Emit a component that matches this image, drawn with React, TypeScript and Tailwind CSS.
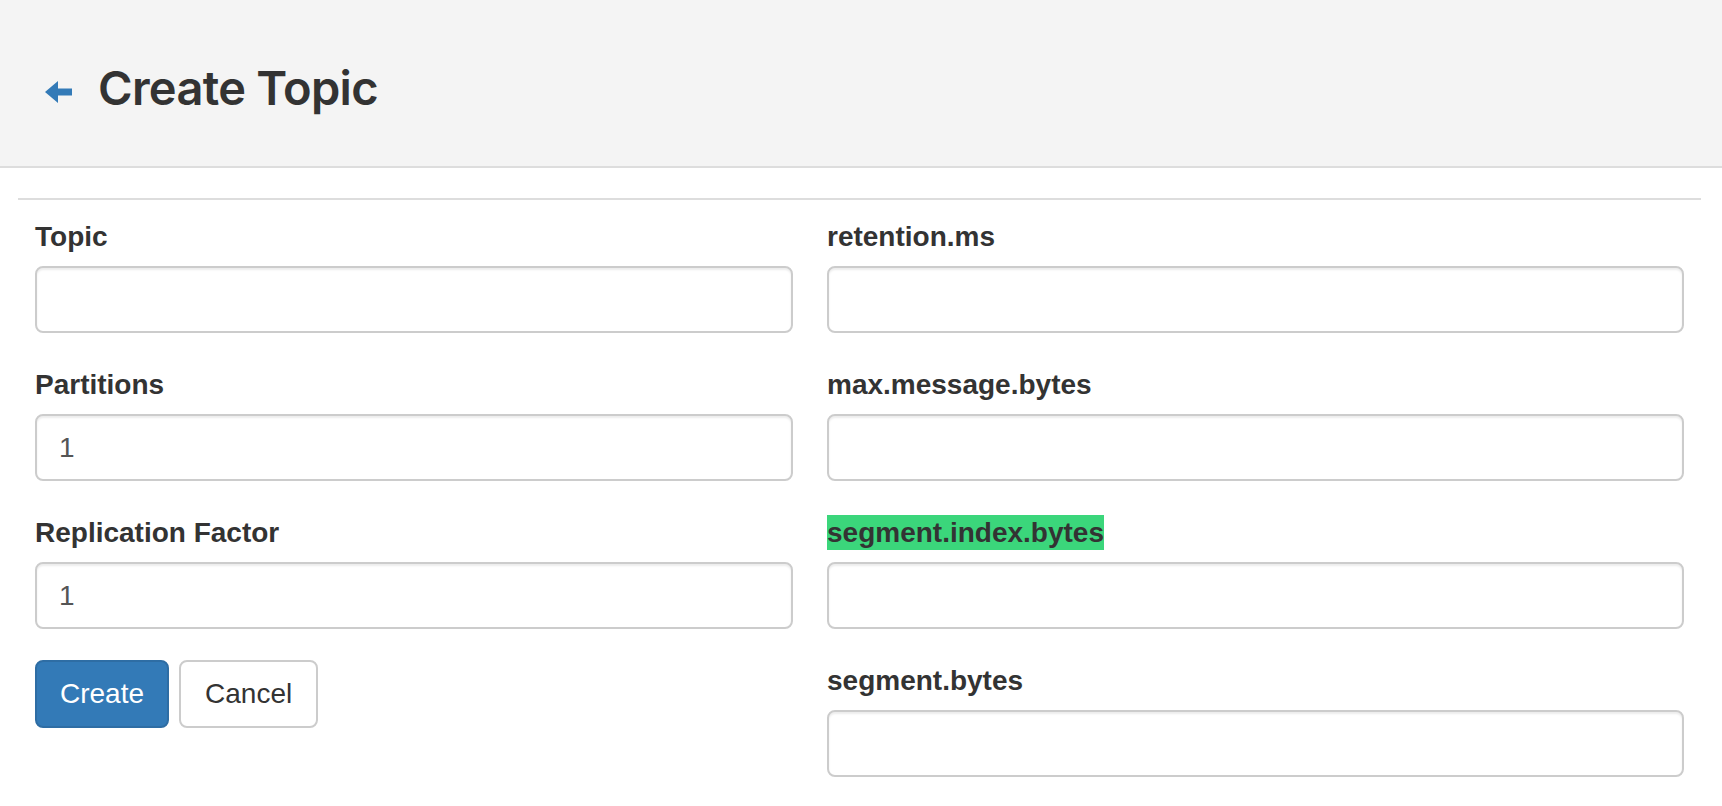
import React from "react";

const Field = ({
  label,
  value = "",
  highlight = false,
}: {
  label: string;
  value?: string;
  highlight?: boolean;
}) => (
  <div className="flex flex-col">
    <label className="block text-[28px] leading-[35px] font-bold text-[#333] mb-[12px]">
      {highlight ? <span className="inline-block bg-[#3bd67b]">{label}</span> : label}
    </label>
    <input
      defaultValue={value}
      className="h-[67px] w-full rounded-[8px] border-2 border-[#ccc] bg-white px-[22px] text-[28px] text-[#555] outline-none shadow-[inset_0_2px_2px_rgba(0,0,0,0.075)]"
    />
  </div>
);

export default function App() {
  return (
    <div className="min-h-screen bg-white font-['Liberation_Sans',Arial,sans-serif] text-[#333]">
      <header className="h-[168px] bg-[#f4f4f4] border-b-2 border-[#ddd] flex items-start pl-[45px] pt-[64px]">
        <svg className="mt-[17px]" width="27" height="22" viewBox="0 0 27 22" aria-hidden="true">
          <polygon points="0,11 13,0 13,7.5 27,7.5 27,14.5 13,14.5 13,22" fill="#337ab7" />
        </svg>
        <h1 className="ml-[26px] font-['Inter',sans-serif] text-[47px] leading-none font-semibold tracking-[-0.7px] text-[#333]">
          Create Topic
        </h1>
      </header>

      <div className="pl-[18px] pr-[21px] pt-[30px]">
        <div className="border-t-2 border-[#ddd] px-[17px] pt-[19px] grid grid-cols-[758px_857px] gap-x-[34px]">
          {/* left column */}
          <div className="flex flex-col">
            <div className="flex flex-col gap-[34px]">
              <Field label="Topic" />
              <Field label="Partitions" value="1" />
              <Field label="Replication Factor" value="1" />
            </div>
            <div className="mt-[31px] flex gap-[10px]">
              <button className="h-[68px] rounded-[8px] border-2 border-[#2e6da4] bg-[#337ab7] px-[23px] text-[28px] text-white">
                Create
              </button>
              <button className="h-[68px] rounded-[8px] border-2 border-[#ccc] bg-white px-[24px] text-[28px] text-[#333]">
                Cancel
              </button>
            </div>
          </div>

          {/* right column */}
          <div className="flex flex-col gap-[34px]">
            <Field label="retention.ms" />
            <Field label="max.message.bytes" />
            <Field label="segment.index.bytes" highlight />
            <Field label="segment.bytes" />
          </div>
        </div>
      </div>
    </div>
  );
}
